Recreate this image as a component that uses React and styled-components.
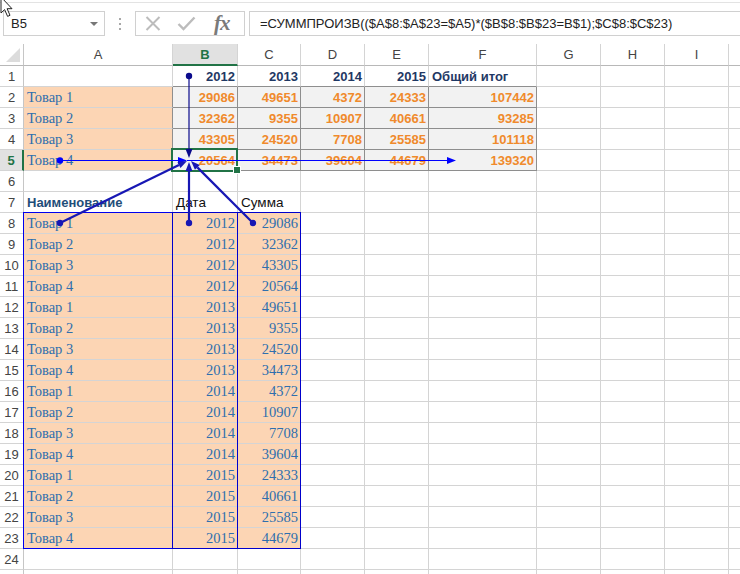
import React from "react";
import styled, { createGlobalStyle, css } from "styled-components";

const COLS = [24, 149, 65, 63, 64, 64, 108, 64, 64, 64, 40];
const LETTERS = ["A", "B", "C", "D", "E", "F", "G", "H", "I", ""];

const GREEN = "#217346";
const GRID = "#d4d4d4";
const BOX = "#8e8e8e";
const PEACH = "#fcd5b4";

const summary = [
  ["Товар 1", 29086, 49651, 4372, 24333, 107442],
  ["Товар 2", 32362, 9355, 10907, 40661, 93285],
  ["Товар 3", 43305, 24520, 7708, 25585, 101118],
  ["Товар 4", 20564, 34473, 39604, 44679, 139320],
];
const years = [2012, 2013, 2014, 2015];

const GlobalStyle = createGlobalStyle`
  html, body { margin: 0; padding: 0; background: #fff; }
  body { font-family: "Liberation Sans", Arial, sans-serif; }
`;

const Page = styled.div`
  position: relative;
  width: 740px;
  height: 574px;
  overflow: hidden;
  background: #fff;
`;

const Toolbar = styled.div`
  box-sizing: border-box;
  height: 42px;
  margin-top: 2px;
  border-top: 1px solid #e3e3e3;
  padding: 8px 0 0 3px;
  display: flex;
  align-items: flex-start;
`;

const NameBox = styled.div`
  box-sizing: border-box;
  width: 102px;
  height: 25px;
  border: 1px solid #d0d0d0;
  display: flex;
  align-items: center;
  justify-content: space-between;
  padding: 0 6px 0 7px;
  font-size: 13px;
  color: #222;
`;

const DropArrow = styled.span`
  width: 0;
  height: 0;
  border-left: 4px solid transparent;
  border-right: 4px solid transparent;
  border-top: 4px solid #777;
`;

const Grip = styled.div`
  width: 30px;
  height: 25px;
  display: flex;
  flex-direction: column;
  align-items: center;
  justify-content: center;
  gap: 3px;
  span {
    width: 2px;
    height: 2px;
    background: #a8a8a8;
  }
`;

const ButtonsBox = styled.div`
  box-sizing: border-box;
  width: 110px;
  height: 25px;
  border: 1px solid #d0d0d0;
  display: flex;
  align-items: center;
  padding-left: 9px;
  gap: 16px;
`;

const Fx = styled.span`
  font-family: "Liberation Serif", "Times New Roman", serif;
  font-style: italic;
  font-weight: bold;
  font-size: 21px;
  color: #7a7a7a;
  margin-left: 2px;
  letter-spacing: -1px;
`;

const FormulaBox = styled.div`
  box-sizing: border-box;
  flex: 1;
  height: 25px;
  margin-left: 4px;
  border: 1px solid #d0d0d0;
  border-right: none;
  display: flex;
  align-items: center;
  padding-left: 10px;
  font-size: 13px;
  color: #222;
  white-space: nowrap;
`;

const Sheet = styled.div`
  display: grid;
  grid-template-columns: ${COLS.map((w) => w + "px").join(" ")};
  grid-template-rows: 22px;
  grid-auto-rows: 21px;
`;

const Corner = styled.div`
  position: relative;
  box-sizing: border-box;
  border-right: 1px solid #c6c6c6;
  border-bottom: 1px solid #b8b8b8;
  &::after {
    content: "";
    position: absolute;
    right: 3px;
    bottom: 3px;
    width: 0;
    height: 0;
    border-left: 14px solid transparent;
    border-bottom: 14px solid #dcdcdc;
  }
`;

const ColHead = styled.div`
  box-sizing: border-box;
  display: flex;
  align-items: center;
  justify-content: center;
  font-size: 13px;
  color: #444;
  border-right: 1px solid ${GRID};
  border-bottom: 1px solid #b8b8b8;
  ${(p) =>
    p.$active &&
    css`
      background: #e1e1e1;
      color: ${GREEN};
      font-weight: bold;
      border-bottom: 2px solid ${GREEN};
    `}
`;

const RowHead = styled.div`
  box-sizing: border-box;
  display: flex;
  align-items: center;
  justify-content: center;
  font-size: 13px;
  color: #444;
  border-right: 1px solid #c6c6c6;
  border-bottom: 1px solid ${GRID};
  ${(p) =>
    p.$active &&
    css`
      background: #e1e1e1;
      color: ${GREEN};
      font-weight: bold;
      border-right: 2px solid ${GREEN};
    `}
`;

const Cell = styled.div`
  position: relative;
  box-sizing: border-box;
  display: flex;
  align-items: flex-end;
  justify-content: ${(p) => (p.$right ? "flex-end" : "flex-start")};
  padding: 0 2px 1px 3px;
  white-space: nowrap;
  background: ${(p) => p.$fill || "#fff"};
  border-right: 1px solid ${(p) => p.$edge || GRID};
  border-bottom: 1px solid ${(p) => p.$under || GRID};
  ${(p) =>
    p.$selected &&
    css`
      z-index: 2;
      &::after {
        content: "";
        position: absolute;
        left: -2px;
        top: -2px;
        right: -1px;
        bottom: -2px;
        border: 2px solid ${GREEN};
      }
      &::before {
        content: "";
        position: absolute;
        right: -4px;
        bottom: -4px;
        width: 6px;
        height: 6px;
        background: ${GREEN};
        border: 1px solid #fff;
        z-index: 1;
      }
    `}
`;

const Title = styled.span`
  font-size: 13px;
  font-weight: bold;
  color: ${(p) => p.$tone || "#1f3864"};
  line-height: 16px;
`;

const Total = styled.span`
  font-size: 13px;
  font-weight: bold;
  color: #f08a2c;
  line-height: 16px;
`;

const Plain = styled.span`
  font-size: 13.5px;
  color: #111;
  line-height: 16px;
`;

const Label = styled.span`
  font-family: "Liberation Serif", "Times New Roman", serif;
  font-size: 14.5px;
  color: #2e6fae;
  line-height: 17px;
`;

const Overlay = styled.svg`
  position: absolute;
  left: 0;
  top: 0;
  z-index: 5;
  pointer-events: none;
`;

function Arrow({ x1, y1, x2, y2, color, width = 1, head = 9, dot = true }) {
  const a = Math.atan2(y2 - y1, x2 - x1);
  const bx = x2 - head * Math.cos(a);
  const by = y2 - head * Math.sin(a);
  const w = head * 0.38;
  const pts = [
    [x2, y2],
    [bx + w * Math.sin(a), by - w * Math.cos(a)],
    [bx - w * Math.sin(a), by + w * Math.cos(a)],
  ]
    .map((p) => p.join(","))
    .join(" ");
  return (
    <g>
      <line x1={x1} y1={y1} x2={bx} y2={by} stroke={color} strokeWidth={width} />
      <polygon points={pts} fill={color} />
      {dot && <circle cx={x1} cy={y1} r={3.2} fill={color} />}
    </g>
  );
}

function Tracing() {
  const thick = "#1717b4";
  return (
    <Overlay width="740" height="574">
      {/* ranges $A$8:$A$23, $B$8:$B$23, $C$8:$C$23 */}
      <rect x="23.5" y="212.5" width="149" height="336" fill="none" stroke="#0000ee" />
      <rect x="172.5" y="212.5" width="65" height="336" fill="none" stroke="#0000cc" />
      <rect x="237.5" y="212.5" width="63" height="336" fill="none" stroke="#0000cc" />

      <Arrow x1={189} y1={76} x2={189} y2={158} color="#0a0a8c" width={1.2} />
      <Arrow x1={60} y1={160.5} x2={187} y2={160.5} color="#0000ff" width={1.2} />
      <Arrow x1={187} y1={160.5} x2={456} y2={160.5} color="#0000ff" width={1.2} dot={false} />
      <Arrow x1={60} y1={223} x2={187} y2={161} color={thick} width={2.2} />
      <Arrow x1={189} y1={223} x2={189} y2={162} color={thick} width={2.2} />
      <Arrow x1={253} y1={223} x2={191} y2={161} color={thick} width={2.2} />

      {/* mouse pointer */}
      <path
        d="M1 -3 L1 13 L4.6 9.6 L7.6 16.4 L10 15.3 L7.1 8.7 L12 8.7 Z"
        fill="#fff"
        stroke="#222"
        strokeWidth="1"
        strokeLinejoin="round"
      />
    </Overlay>
  );
}

function buildRow(r) {
  const cells = [];
  const empty = (i) => <Cell key={`${r}-${i}`} />;

  if (r === 1) {
    cells.push(empty(0));
    years.forEach((y, i) =>
      cells.push(
        <Cell key={`1-${i + 1}`} $right $under={BOX}>
          <Title>{y}</Title>
        </Cell>
      )
    );
    cells.push(
      <Cell key="1-5" $under={BOX}>
        <Title>Общий итог</Title>
      </Cell>
    );
    for (let i = 6; i < 10; i++) cells.push(empty(i));
  } else if (r >= 2 && r <= 5) {
    const row = summary[r - 2];
    cells.push(
      <Cell key={`${r}-0`} $fill={PEACH} $edge={BOX}>
        <Label>{row[0]}</Label>
      </Cell>
    );
    row.slice(1).forEach((v, i) =>
      cells.push(
        <Cell
          key={`${r}-${i + 1}`}
          $right
          $fill="#f2f2f2"
          $edge={BOX}
          $under={BOX}
          $selected={r === 5 && i === 0}
        >
          <Total>{v}</Total>
        </Cell>
      )
    );
    for (let i = 6; i < 10; i++) cells.push(empty(i));
  } else if (r === 7) {
    cells.push(
      <Cell key="7-0">
        <Title $tone="#1f4e79">Наименование</Title>
      </Cell>
    );
    cells.push(
      <Cell key="7-1">
        <Plain>Дата</Plain>
      </Cell>
    );
    cells.push(
      <Cell key="7-2">
        <Plain>Сумма</Plain>
      </Cell>
    );
    for (let i = 3; i < 10; i++) cells.push(empty(i));
  } else if (r >= 8 && r <= 23) {
    const k = r - 8;
    const year = years[Math.floor(k / 4)];
    const item = k % 4;
    const sum = summary[item][Math.floor(k / 4) + 1];
    cells.push(
      <Cell key={`${r}-0`} $fill={PEACH}>
        <Label>{summary[item][0]}</Label>
      </Cell>
    );
    cells.push(
      <Cell key={`${r}-1`} $fill={PEACH} $right>
        <Label>{year}</Label>
      </Cell>
    );
    cells.push(
      <Cell key={`${r}-2`} $fill={PEACH} $right>
        <Label>{sum}</Label>
      </Cell>
    );
    for (let i = 3; i < 10; i++) cells.push(empty(i));
  } else {
    for (let i = 0; i < 10; i++) cells.push(empty(i));
  }
  return cells;
}

export default function App() {
  const rows = Array.from({ length: 25 }, (_, i) => i + 1);
  return (
    <>
      <GlobalStyle />
      <Page>
        <Toolbar>
          <NameBox>
            B5
            <DropArrow />
          </NameBox>
          <Grip>
            <span />
            <span />
            <span />
          </Grip>
          <ButtonsBox>
            <svg width="16" height="15" viewBox="0 0 16 15">
              <path d="M1.5 1 L14.5 14 M14.5 1 L1.5 14" stroke="#bcbcbc" strokeWidth="2" />
            </svg>
            <svg width="19" height="15" viewBox="0 0 19 15">
              <path d="M1.5 8 L6.5 13 L17.5 1.5" stroke="#bcbcbc" strokeWidth="2.4" fill="none" />
            </svg>
            <Fx>fx</Fx>
          </ButtonsBox>
          <FormulaBox>=СУММПРОИЗВ(($A$8:$A$23=$A5)*($B$8:$B$23=B$1);$C$8:$C$23)</FormulaBox>
        </Toolbar>

        <Sheet>
          <Corner />
          {LETTERS.map((l) => (
            <ColHead key={"h" + l} $active={l === "B"}>
              {l}
            </ColHead>
          ))}
          {rows.map((r) => (
            <React.Fragment key={r}>
              {/* row 25 is only a sliver at the window's bottom edge */}
              <RowHead $active={r === 5}>{r < 25 ? r : ""}</RowHead>
              {buildRow(r)}
            </React.Fragment>
          ))}
        </Sheet>

        <Tracing />
      </Page>
    </>
  );
}
